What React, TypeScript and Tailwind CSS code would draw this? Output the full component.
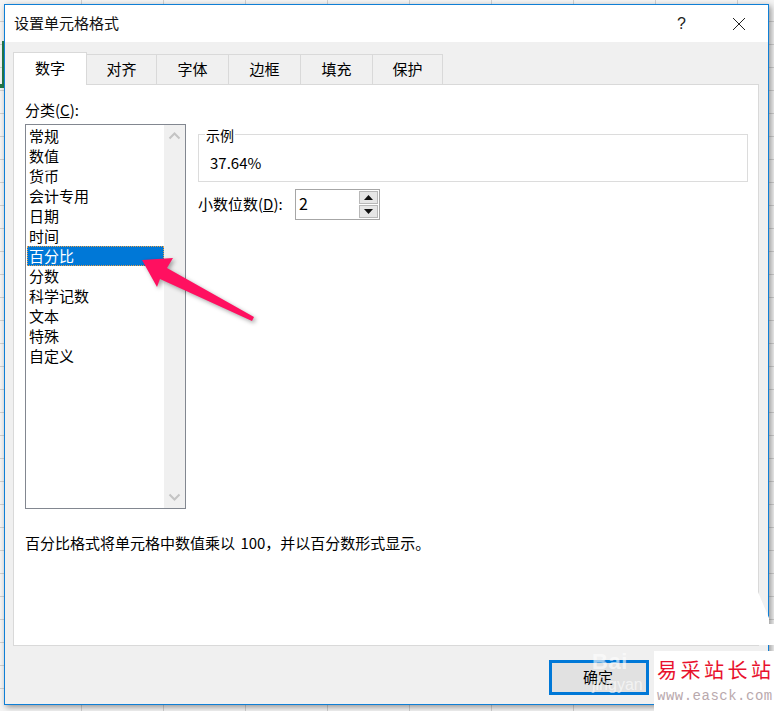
const categories = ["常规", "数值", "货币", "会计专用", "日期", "时间", "百分比", "分数", "科学记数", "文本", "特殊", "自定义"];
const tabs = [
  { label: "数字", w: "w-[74px]" },
  { label: "对齐", w: "w-[71px]" },
  { label: "字体", w: "w-[73px]" },
  { label: "边框", w: "w-[73px]" },
  { label: "填充", w: "w-[73px]" },
  { label: "保护", w: "w-[71px]" },
];

function Tabs() {
  return (
    <div className="ml-[8px] flex h-[32px] items-end">
      {tabs.map((t, i) =>
        i === 0 ? (
          <div key={t.label} className={`${t.w} relative z-10 -mb-px flex h-[33px] items-center justify-center border border-b-0 border-[#d9d9d9] bg-white pb-[2px] text-[15px] text-black`}>
            {t.label}
          </div>
        ) : (
          <div key={t.label} className={`${t.w} -ml-px flex h-[30px] items-center justify-center border border-b-0 border-[#d9d9d9] bg-[#f0f0f0] text-[15px] text-black`}>
            {t.label}
          </div>
        ),
      )}
    </div>
  );
}

function CategoryList() {
  return (
    <div className="flex h-[385px] w-[161px] border border-[#828790] bg-white">
      <ul className="flex-1 pt-[1px] pl-[1px]">
        {categories.map((c) =>
          c === "百分比" ? (
            <li key={c} className="h-[20px] border border-dotted border-[#e8a04a] bg-[#0078d7] pl-[1px] text-[15px] leading-[18px] text-white">
              {c}
            </li>
          ) : (
            <li key={c} className="h-[20px] pl-[2px] text-[15px] leading-[20px] text-black">
              {c}
            </li>
          ),
        )}
      </ul>
      <div className="flex w-[21px] flex-col items-center justify-between bg-[#f0f0f0] py-[6px]">
        <svg width="13" height="9" viewBox="0 0 13 9" fill="none" stroke="#c4c4c4" strokeWidth="2"><path d="M1.5 7.5 6.5 2.5l5 5" /></svg>
        <svg width="13" height="9" viewBox="0 0 13 9" fill="none" stroke="#c4c4c4" strokeWidth="2"><path d="M1.5 1.5 6.5 6.5l5-5" /></svg>
      </div>
    </div>
  );
}

function Spinner() {
  return (
    <div className="flex h-[31px] w-[85px] border border-[#a6a6a6] bg-white">
      <span className="flex-1 pl-[3px] text-[16px] leading-[26px] text-black">2</span>
      <div className="my-[1px] mr-[1px] flex w-[19px] flex-col gap-[1px]">
        <div className="flex flex-1 items-center justify-center border border-[#b8b8b8] bg-[#e6e6e6]">
          <svg width="9" height="5" viewBox="0 0 9 5" fill="#111"><path d="M4.5 0 9 5H0z" /></svg>
        </div>
        <div className="flex flex-1 items-center justify-center border border-[#b8b8b8] bg-[#e6e6e6]">
          <svg width="9" height="5" viewBox="0 0 9 5" fill="#111"><path d="M0 0h9L4.5 5z" /></svg>
        </div>
      </div>
    </div>
  );
}

function NumberPanel() {
  return (
    <div className="ml-[8px] h-[562px] w-[746px] border border-[#d9d9d9] bg-white pt-[15px] pl-[11px]">
      <p className="h-[24px] text-[15px] leading-[20px] text-black">
        分类(<span className="underline">C</span>):
      </p>
      <div className="flex gap-[12px]">
        <CategoryList />
        <div className="w-[550px] pt-[10px]">
          <div className="h-[48px] border border-[#dcdcdc]">
            <div className="flex h-full flex-col">
              <span className="-mt-[10px] ml-[6px] w-fit bg-white px-px text-[14px] leading-[20px] text-black">示例</span>
              <span className="mt-[8px] ml-[11px] text-[15px] leading-[20px] text-black">37.64%</span>
            </div>
          </div>
          <div className="mt-[7px] flex items-center gap-[8px]">
            <span className="w-[89px] text-[15px] text-black">
              小数位数(<span className="underline">D</span>):
            </span>
            <Spinner />
          </div>
        </div>
      </div>
      <p className="mt-[24px] text-[15px] leading-[20px] text-black">
        百分比格式将单元格中数值乘以 <span className="ml-[2px]">100</span>，并以百分数形式显示。
      </p>
    </div>
  );
}

function Dialog() {
  return (
    <div className="ml-[4px] h-[701px] w-[765px] border border-[#0f7fd6] bg-[#f0f0f0] shadow-[2px_2px_6px_rgba(0,0,0,0.4)]">
      <div className="flex h-[37px] items-center bg-white pl-[9px]">
        <span className="flex-1 text-[15px] text-[#111]">设置单元格格式</span>
        <span className="mr-[46px] font-['Liberation_Sans'] text-[16px] text-[#222]">?</span>
        <svg className="mr-[22px]" width="14" height="14" viewBox="0 0 14 14" stroke="#222" strokeWidth="1"><path d="M1 1l12 12M13 1 1 13" /></svg>
      </div>
      <div className="pt-[10px]">
        <Tabs />
        <NumberPanel />
        <div className="flex justify-start pt-[14px] pl-[544px]">
          <button className="flex h-[35px] w-[100px] items-center justify-center border-[3px] border-[#0078d7] bg-[#e1e1e1] pr-[2px] text-[15px] text-black">确定</button>
        </div>
      </div>
    </div>
  );
}

export default function App() {
  return (
    <div className="relative h-[711px] w-[774px] overflow-hidden bg-[#f4f4f4] bg-[repeating-linear-gradient(90deg,transparent_0,transparent_81px,#d0d0d0_81px,#d0d0d0_82px),repeating-linear-gradient(0deg,transparent_0,transparent_22px,#d0d0d0_22px,#d0d0d0_23px)] pt-[4px] font-['Noto_Sans_CJK_SC','Noto_Sans',sans-serif]">
      <Dialog />

      {/* selected cell edge behind the dialog */}
      <div className="absolute top-[41px] left-0 h-[47px] w-[4px] border-r-2 border-b-4 border-[#217346]" />

      {/* red arrow pasted on the screenshot */}
      <svg className="absolute top-[250px] left-[135px] drop-shadow-[2px_2px_2px_rgba(0,0,0,0.35)]" width="130" height="80" viewBox="135 250 130 80">
        <path d="M142 260 173 258 167 268 254 317 252 321 160 279 157 287Z" fill="#ff1060" />
      </svg>

      {/* white wedge left by the stamp over the dialog edge */}
      <svg className="absolute top-[590px] left-[755px]" width="19" height="55" viewBox="755 590 19 55">
        <path d="M757 592H758L769 618V624H774V645H757Z" fill="#fff" />
      </svg>

      {/* jingyan watermark */}
      <div className="absolute top-[651px] left-[592px] leading-none text-white/60">
        <div className="font-['Liberation_Sans'] text-[22px] font-bold tracking-wide">Bai</div>
        <div className="mt-[4px] font-['Liberation_Sans'] text-[16px]">jingyan</div>
      </div>

      {/* site stamp */}
      <div className="absolute top-[651px] left-[654px] h-[60px] w-[120px] bg-white pt-[6px] pl-[3px]">
        <div className="text-[20px] leading-[26px] tracking-[3.5px] whitespace-nowrap text-[#e8112d]">易采站长站</div>
        <div className="mt-[5px] font-['Liberation_Mono',monospace] text-[14px] leading-[16px] tracking-[0.5px] whitespace-nowrap text-[#b9a9ad]">www.easck.com</div>
      </div>
    </div>
  );
}
